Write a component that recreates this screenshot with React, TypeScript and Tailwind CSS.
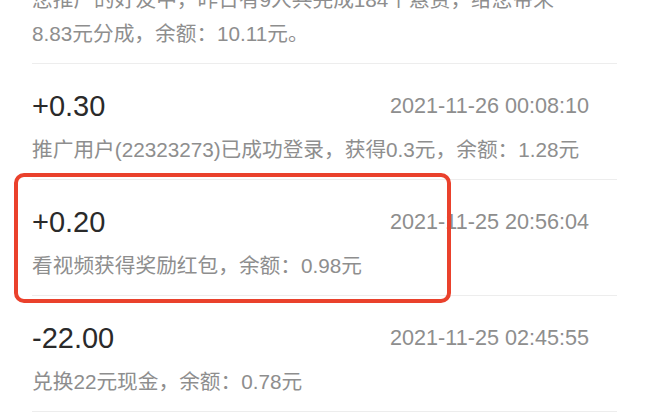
import React from "react";

const font = {
  fontFamily: '"Liberation Sans", "Noto Sans CJK SC", sans-serif',
};

type Row = { amount: string; date: string; desc: string };

const rows: Row[] = [
  {
    amount: "+0.30",
    date: "2021-11-26 00:08:10",
    desc: "推广用户(22323273)已成功登录，获得0.3元，余额：1.28元",
  },
  {
    amount: "+0.20",
    date: "2021-11-25 20:56:04",
    desc: "看视频获得奖励红包，余额：0.98元",
  },
  {
    amount: "-22.00",
    date: "2021-11-25 02:45:55",
    desc: "兑换22元现金，余额：0.78元",
  },
];

export default function App() {
  return (
    <div
      className="relative w-full h-[418px] overflow-hidden bg-white"
      style={font}
    >
      <div className="ml-[32px] mr-[33px] border-b border-[#ededed] pb-[12px] mt-[-17px]">
        <div className="text-[20.7px] leading-[34px] text-[#8e8e8e] whitespace-nowrap">
          您推广的好友中，昨日有9人共完成184个悬赏，给您带来
        </div>
        <div className="text-[20.7px] leading-[34px] text-[#8e8e8e] whitespace-nowrap">
          8.83元分成，余额：10.11元。
        </div>
      </div>
      {rows.map((r) => (
        <div
          key={r.date}
          className="ml-[32px] mr-[33px] border-b border-[#ededed] pt-[24px] pb-[12px]"
        >
          <div className="flex items-center justify-between pr-[28px] h-[36px]">
            <span className="text-[29px] leading-[36px] text-[#2a2a2a]">
              {r.amount}
            </span>
            <span className="text-[21.6px] leading-[36px] text-[#8e8e8e]">
              {r.date}
            </span>
          </div>
          <div className="mt-[9px] text-[20.7px] leading-[34px] text-[#8e8e8e] whitespace-nowrap">
            {r.desc}
          </div>
        </div>
      ))}
      <div className="absolute left-[14px] top-[173px] w-[437px] h-[130px] border-4 border-[#ea412c] rounded-[10px]" />
    </div>
  );
}
